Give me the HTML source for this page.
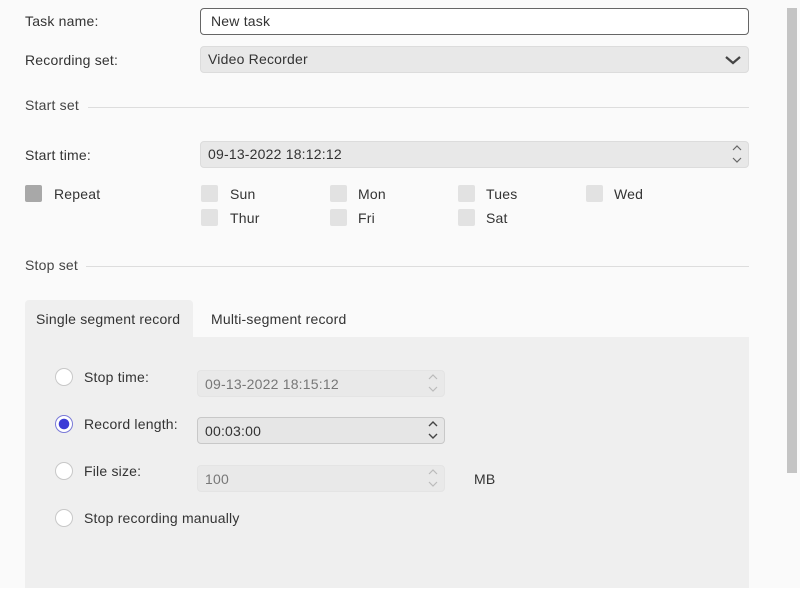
<!DOCTYPE html>
<html><head><style>
*{box-sizing:border-box;margin:0;padding:0}
body{width:800px;height:600px;background:#fafafa;font-family:"Liberation Sans",sans-serif;font-size:14px;letter-spacing:0.2px;color:#333;position:relative;overflow:hidden}
.a{position:absolute}
.lbl{position:absolute;line-height:18px}
.box{position:absolute;border-radius:4px;background:#e8e8e8;border:1px solid #dcdcdc;padding-left:7px;line-height:24px}
.cb{position:absolute;width:17px;height:17px;background:#e2e2e2;border-radius:2px}
.rd{position:absolute;width:18px;height:18px;border-radius:50%;border:1.5px solid #c8c8c8;background:#fff}
.line{position:absolute;height:1px;background:#ddd}
</style></head><body>
<div class="lbl" style="left:25px;top:12px">Task name:</div>
<div class="box" style="left:200px;top:8px;width:549px;height:27px;background:#fff;border:1.5px solid #666;padding-left:10px">New task</div>
<div class="lbl" style="left:25px;top:51px">Recording set:</div>
<div class="box" style="left:200px;top:46px;width:549px;height:27px">Video Recorder</div>
<svg class="a" style="left:724px;top:54px" width="18" height="12"><path d="M2 3 L9 9 L16 3" stroke="#444" stroke-width="2.2" fill="none"/></svg>
<div class="lbl" style="left:25px;top:96px;color:#444">Start set</div>
<div class="line" style="left:88px;top:107px;width:661px"></div>
<div class="lbl" style="left:25px;top:146px">Start time:</div>
<div class="box" style="left:200px;top:141px;width:549px;height:27px">09-13-2022 18:12:12</div>
<svg class="a" style="left:731px;top:143px" width="12" height="22"><path d="M2 7 L6 3 L10 7 M2 15 L6 19 L10 15" stroke="#666" stroke-width="1.2" fill="none"/></svg>
<div class="cb" style="left:25px;top:185px;background:#a8a8a8"></div>
<div class="lbl" style="left:54px;top:185px">Repeat</div>
<div class="cb" style="left:201px;top:185px"></div><div class="lbl" style="left:230px;top:185px">Sun</div>
<div class="cb" style="left:330px;top:185px"></div><div class="lbl" style="left:358px;top:185px">Mon</div>
<div class="cb" style="left:458px;top:185px"></div><div class="lbl" style="left:486px;top:185px">Tues</div>
<div class="cb" style="left:586px;top:185px"></div><div class="lbl" style="left:614px;top:185px">Wed</div>
<div class="cb" style="left:201px;top:209px"></div><div class="lbl" style="left:230px;top:209px">Thur</div>
<div class="cb" style="left:330px;top:209px"></div><div class="lbl" style="left:358px;top:209px">Fri</div>
<div class="cb" style="left:458px;top:209px"></div><div class="lbl" style="left:486px;top:209px">Sat</div>
<div class="lbl" style="left:25px;top:256px;color:#444">Stop set</div>
<div class="line" style="left:86px;top:266px;width:663px"></div>
<div class="a" style="left:25px;top:300px;width:168px;height:40px;background:#efefef;border-radius:4px 4px 0 0"></div>
<div class="lbl" style="left:36px;top:310px">Single segment record</div>
<div class="lbl" style="left:211px;top:310px">Multi-segment record</div>
<div class="a" style="left:25px;top:337px;width:724px;height:251px;background:#efefef"></div>
<div class="rd" style="left:55px;top:368px"></div><div class="lbl" style="left:84px;top:368px">Stop time:</div>
<div class="box" style="left:197px;top:370px;width:248px;height:27px;background:#e9e9e9;border-color:#e4e4e4;color:#777;padding-top:1px">09-13-2022 18:15:12</div>
<svg class="a" style="left:427px;top:372px" width="12" height="22"><path d="M2 7 L6 3 L10 7 M2 15 L6 19 L10 15" stroke="#bbb" stroke-width="1.2" fill="none"/></svg>
<div class="rd" style="left:55px;top:415px;border-color:#7a7ad8;background:radial-gradient(circle,#3b3bd6 0 5px,#fff 5.5px)"></div><div class="lbl" style="left:84px;top:415px">Record length:</div>
<div class="box" style="left:197px;top:417px;width:248px;height:27px;background:#e6e6e6;border-color:#c8c8c8;padding-top:1px">00:03:00</div>
<svg class="a" style="left:427px;top:419px" width="12" height="22"><path d="M2 7 L6 3 L10 7 M2 15 L6 19 L10 15" stroke="#444" stroke-width="1.4" fill="none"/></svg>
<div class="rd" style="left:55px;top:462px"></div><div class="lbl" style="left:84px;top:462px">File size:</div>
<div class="box" style="left:197px;top:465px;width:248px;height:27px;background:#e9e9e9;border-color:#e4e4e4;color:#777;padding-top:1px">100</div>
<svg class="a" style="left:427px;top:467px" width="12" height="22"><path d="M2 7 L6 3 L10 7 M2 15 L6 19 L10 15" stroke="#bbb" stroke-width="1.2" fill="none"/></svg>
<div class="lbl" style="left:474px;top:470px">MB</div>
<div class="rd" style="left:55px;top:509px"></div><div class="lbl" style="left:84px;top:509px">Stop recording manually</div>
<div class="a" style="left:787px;top:8px;width:10px;height:465px;background:#c4c4c4"></div>
<div class="a" style="left:0;top:588px;width:800px;height:12px;background:#fff"></div>
</body></html>
